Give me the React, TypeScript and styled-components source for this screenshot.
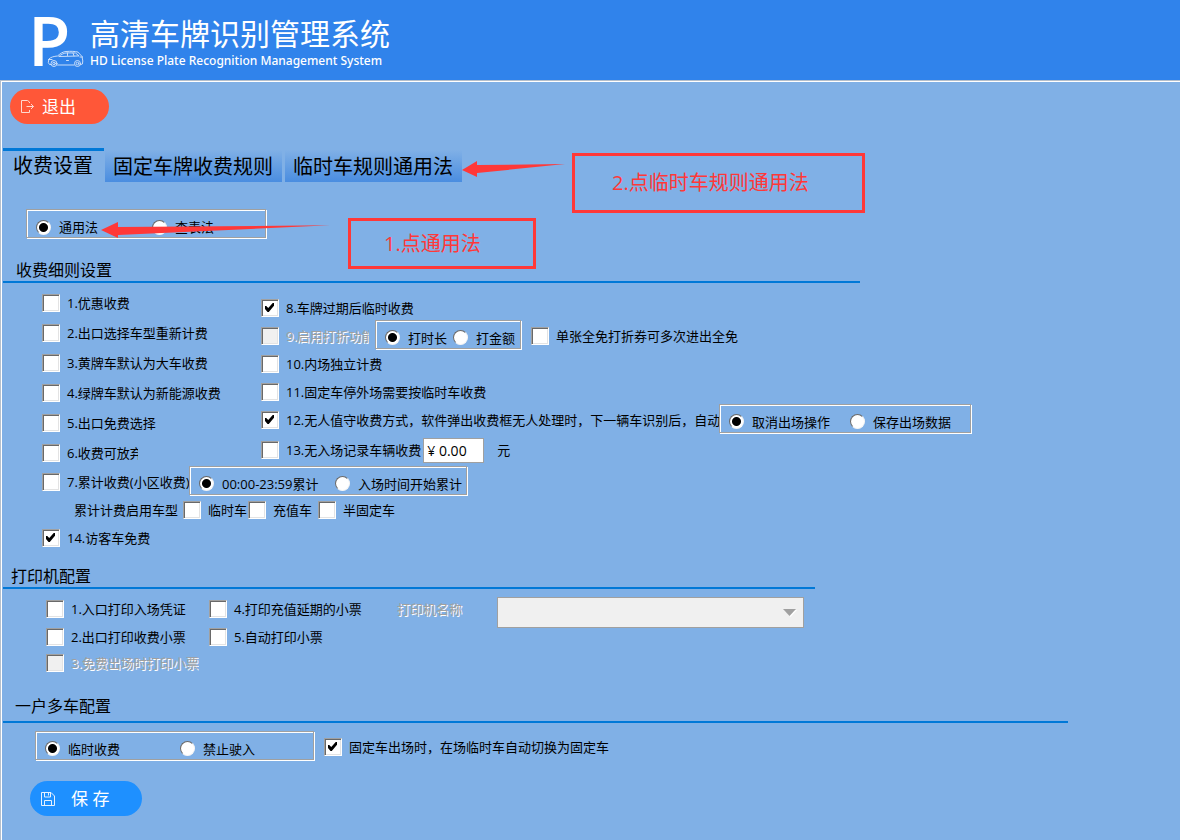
import React, { useId, useState } from "react";
import styled, { createGlobalStyle } from "styled-components";

const page = "#80b0e6";
const accent = "#0078d7";
const red = "#ff3838";

const GlobalStyle = createGlobalStyle`
  * { box-sizing: border-box; }
  body {
    margin: 0;
    background: ${page};
    color: #000;
    font: 13px/18px "Open Sans", "Noto Sans CJK SC", sans-serif;
  }
  button, input, select { font: inherit; color: inherit; margin: 0; }
`;

const Shell = styled.div`
  min-height: 100vh;
  display: flex;
  flex-direction: column;
`;

const Header = styled.header`
  height: 80px;
  display: flex;
  align-items: flex-start;
  gap: 6px;
  padding: 14px 32px 0;
  background: #3083eb;
  color: #fff;
`;

const LogoMark = styled.svg`
  flex: none;
  overflow: visible;
`;

const Titles = styled.div`
  display: flex;
  flex-direction: column;
  white-space: nowrap;
`;

const Title = styled.h1`
  margin: 0;
  font-size: 30px;
  line-height: 40px;
  font-weight: 400;
`;

const Subtitle = styled.p`
  margin: 0;
  font: 500 12px/14px "Noto Sans", sans-serif;
`;

const Main = styled.main`
  position: relative;
  flex: 1;
  padding: 8px 0 24px 2px;
  border-top: 1px solid #b4bfcc;
  border-left: 1px solid #b4bfcc;
  box-shadow: inset 1px 1px 0 #fff;
`;

const PillButton = styled.button<{ $color: string; $gap: number; $width: number; $left: number }>`
  display: flex;
  align-items: center;
  gap: ${(p) => p.$gap}px;
  width: ${(p) => p.$width}px;
  height: 35px;
  margin-left: ${(p) => p.$left}px;
  padding: 0 10px;
  border: 0;
  border-radius: 18px;
  background: ${(p) => p.$color};
  color: #fff;
  font-size: 17px;
  line-height: 24px;
  white-space: nowrap;
`;

const Tabs = styled.div`
  display: flex;
  align-items: flex-end;
  gap: 3px;
  height: 34px;
  margin-top: 24px;
`;

const Tab = styled.button<{ $active?: boolean }>`
  height: ${(p) => (p.$active ? 34 : 32)}px;
  margin-right: ${(p) => (p.$active ? -2 : 0)}px;
  padding: ${(p) => (p.$active ? "0 11px 2px 10px" : "0 9px 0 8px")};
  border: 0;
  border-top: ${(p) => (p.$active ? `3px solid ${accent}` : "0")};
  background: ${(p) => (p.$active ? page : `linear-gradient(${page}, #4a8de0)`)};
  font-size: 20px;
  line-height: 29px;
  white-space: nowrap;
`;

const GroupBox = styled.div<{ $width: number }>`
  display: flex;
  flex: none;
  align-items: center;
  width: ${(p) => p.$width}px;
  height: 29px;
  margin-bottom: 4px;
  padding: 7px 0 0 9px;
  border: 1px solid #a0a0a0;
  box-shadow: 1px 1px 0 #fff, inset 1px 1px 0 #fff;
  background: ${page};
`;

const ModeRow = styled.div`
  margin: 27px 0 0 23px;
`;

const Section = styled.section<{ $top: number; $line: number }>`
  margin-top: ${(p) => p.$top}px;
  & > h2 { max-width: ${(p) => p.$line}px; }
`;

const SectionTitle = styled.h2<{ $indent: number; $bottom?: number }>`
  margin: 0;
  padding: 0 0 ${(p) => p.$bottom ?? 0}px ${(p) => p.$indent}px;
  border-bottom: 2px solid ${accent};
  font-size: 16px;
  line-height: 22px;
  font-weight: 400;
`;

const Columns = styled.div<{ $left: number; $top: number }>`
  display: flex;
  padding: ${(p) => p.$top}px 0 0 ${(p) => p.$left}px;
`;

const Column = styled.div<{ $width?: number; $top?: number }>`
  flex: none;
  width: ${(p) => (p.$width ? `${p.$width}px` : "auto")};
  padding-top: ${(p) => p.$top ?? 0}px;
`;

const Row = styled.div<{ $height?: number; $left?: number; $top?: number }>`
  display: flex;
  align-items: center;
  height: ${(p) => p.$height ?? 28}px;
  padding-left: ${(p) => p.$left ?? 0}px;
  margin-top: ${(p) => p.$top ?? 0}px;
  white-space: nowrap;
`;

const Choice = styled.span<{ $width?: number; $gap?: number }>`
  display: flex;
  flex: none;
  align-items: center;
  gap: ${(p) => p.$gap ?? 7}px;
  width: ${(p) => (p.$width ? `${p.$width}px` : "auto")};
  overflow: hidden;
  white-space: nowrap;
`;

const ChoiceLabel = styled.label<{ $disabled?: boolean }>`
  color: ${(p) => (p.$disabled ? "#a0a0a0" : "#000")};
  text-shadow: ${(p) => (p.$disabled ? "1px 1px 0 #fff" : "none")};
`;

const Checkbox = styled.input`
  appearance: none;
  position: relative;
  flex: none;
  width: 18px;
  height: 18px;
  border: 1px solid;
  border-color: #a0a0a0 #fff #fff #a0a0a0;
  background: #fff;
  box-shadow: inset 1px 1px 0 #696969, inset -1px -1px 0 #e3e3e3;
  &:disabled { background: #f0f0f0; }
  &:checked::after {
    content: "";
    position: absolute;
    left: 3px;
    top: 3px;
    width: 9px;
    height: 9px;
    background: #000;
    clip-path: polygon(0 33%, 14% 33%, 36% 55%, 86% 0, 100% 0, 100% 30%, 42% 100%, 28% 100%, 0 68%);
  }
`;

const Radio = styled.input`
  appearance: none;
  flex: none;
  width: 15px;
  height: 15px;
  border: 1px solid;
  border-color: #696969 #f4f4f4 #f4f4f4 #696969;
  border-radius: 50%;
  background: #fff;
  &:checked { background: radial-gradient(circle, #000 4px, #fff 5px); }
`;

const Price = styled.input`
  width: 61px;
  height: 25px;
  margin: 0 13px 0 2px;
  padding: 0 3px;
  border: 1px solid #a0a0a0;
  background: #fff;
  font-size: 14px;
`;

const SelectWrap = styled.span`
  position: relative;
  display: flex;
  margin: 6px 0 0 35px;
  svg { position: absolute; right: 7px; top: 12px; }
`;

const PrinterSelect = styled.select`
  appearance: none;
  width: 307px;
  height: 31px;
  border: 1px solid #a0a0a0;
  border-radius: 0;
  background: #f0f0f0;
  opacity: 1;
`;

const Callout = styled.div<{ $x: number; $y: number; $w: number; $h: number; $pad: number }>`
  position: absolute;
  left: ${(p) => p.$x}px;
  top: ${(p) => p.$y}px;
  width: ${(p) => p.$w}px;
  height: ${(p) => p.$h}px;
  padding-left: ${(p) => p.$pad}px;
  display: flex;
  align-items: center;
  border: 3px solid ${red};
  color: ${red};
  font-size: 20px;
  line-height: 28px;
  white-space: nowrap;
`;

const Arrows = styled.svg`
  position: absolute;
  left: 99px;
  top: 79px;
  pointer-events: none;
`;

type CheckProps = { text: string; checked?: boolean; disabled?: boolean; width?: number };

function Check({ text, checked = false, disabled, width }: CheckProps) {
  const id = useId();
  return (
    <Choice $width={width}>
      <Checkbox id={id} type="checkbox" defaultChecked={checked} disabled={disabled} />
      <ChoiceLabel htmlFor={id} $disabled={disabled}>{text}</ChoiceLabel>
    </Choice>
  );
}

type RadioSetProps = { label: string; options: string[]; width: number; first: number };

function RadioSet({ label, options, width, first }: RadioSetProps) {
  const id = useId();
  const [value, setValue] = useState(0);
  return (
    <GroupBox $width={width} role="radiogroup" aria-label={label}>
      {options.map((option, i) => (
        <Choice key={option} $gap={8} $width={i === 0 ? first : undefined}>
          <Radio id={`${id}${i}`} type="radio" name={id} checked={value === i} onChange={() => setValue(i)} />
          <ChoiceLabel htmlFor={`${id}${i}`}>{option}</ChoiceLabel>
        </Choice>
      ))}
    </GroupBox>
  );
}

function Logo() {
  return (
    <LogoMark width="52" height="54" viewBox="0 0 52 54" fill="none" aria-hidden="true">
      <text x="-4" y="52" fill="#fff" fontFamily="Open Sans" fontWeight="600" fontSize="69">P</text>
      <g stroke="#c9defa" strokeWidth="1" strokeLinecap="round" strokeLinejoin="round">
        <path d="M19 50.500h-1.500l-1.200-2 .6-3.500c2-2 5-2.600 8.600-3 3-2.600 5.500-4.300 8.500-4.500 5-.4 9-.2 12 .6l4 4.400.8 4.500-.4 3-2.400.8M25.500 51H42" />
        <path d="M27 42.300c2.500-2 5-3.300 8-3.400l8.500.1 3.300 2.700z" />
        <path d="M35.500 39v2.500M41 39l1 3M34.500 46.500h2M16.500 45.500h3.500M48 43h2.500" />
        <circle cx="22" cy="49.500" r="3" />
        <circle cx="22" cy="49.500" r="1.300" />
        <circle cx="45.500" cy="49.500" r="3" />
        <circle cx="45.500" cy="49.500" r="1.300" />
      </g>
    </LogoMark>
  );
}

const leftChecks: CheckProps[] = [
  { text: "1.优惠收费" },
  { text: "2.出口选择车型重新计费" },
  { text: "3.黄牌车默认为大车收费" },
  { text: "4.绿牌车默认为新能源收费" },
  { text: "5.出口免费选择" },
  { text: "6.收费可放弃", width: 96 },
];

export default function App() {
  return (
    <Shell>
      <GlobalStyle />
      <Header>
        <Logo />
        <Titles>
          <Title>高清车牌识别管理系统</Title>
          <Subtitle>HD License Plate Recognition Management System</Subtitle>
        </Titles>
      </Header>
      <Main>
        <PillButton type="button" $color="#ff5738" $gap={7} $width={99} $left={7}>
          <svg width="15" height="15" viewBox="0 0 15 15" fill="none" stroke="#ffd9d0" aria-hidden="true">
            <path d="M9.500 4V3L7.500 1.500h-6v12h8V11M6.500 7.500h7M11 5l2.500 2.500L11 10" />
          </svg>
          退出
        </PillButton>

        <Tabs role="tablist">
          <Tab type="button" role="tab" aria-selected="true" $active>收费设置</Tab>
          <Tab type="button" role="tab" aria-selected="false">固定车牌收费规则</Tab>
          <Tab type="button" role="tab" aria-selected="false">临时车规则通用法</Tab>
        </Tabs>

        <ModeRow>
          <RadioSet label="收费方法" options={["通用法", "查表法"]} width={240} first={116} />
        </ModeRow>

        <Section $top={21} $line={857}>
          <SectionTitle $indent={13}>收费细则设置</SectionTitle>
          <Columns $left={39} $top={5}>
            <Column $width={219}>
              {leftChecks.map((item) => (
                <Row key={item.text} $height={30}><Check {...item} /></Row>
              ))}
            </Column>
            <Column $top={6}>
              <Row><Check text="8.车牌过期后临时收费" checked /></Row>
              <Row>
                <Check text="9.启用打折功能" disabled width={108} />
                <Row $left={6}>
                  <RadioSet label="打折方式" options={["打时长", "打金额"]} width={146} first={68} />
                </Row>
                <Row $left={10}><Check text="单张全免打折券可多次进出全免" /></Row>
              </Row>
              <Row><Check text="10.内场独立计费" /></Row>
              <Row><Check text="11.固定车停外场需要按临时车收费" /></Row>
              <Row>
                <Check text="12.无人值守收费方式，软件弹出收费框无人处理时，下一辆车识别后，自动" checked width={458} />
                <RadioSet label="无人处理" options={["取消出场操作", "保存出场数据"]} width={252} first={121} />
              </Row>
              <Row $height={32}>
                <Check text="13.无入场记录车辆收费" />
                <Price aria-label="无入场记录车辆收费" defaultValue="¥ 0.00" />
                <span>元</span>
              </Row>
            </Column>
          </Columns>
          <Row $left={39}>
            <Check text="7.累计收费(小区收费)" width={147} />
            <RadioSet label="累计方式" options={["00:00-23:59累计", "入场时间开始累计"]} width={278} first={136} />
          </Row>
          <Row $left={71}>
            <Choice $width={109}>累计计费启用车型</Choice>
            <Check text="临时车" width={65} />
            <Check text="充值车" width={70} />
            <Check text="半固定车" />
          </Row>
          <Row $left={39}><Check text="14.访客车免费" checked /></Row>
        </Section>

        <Section $top={13} $line={812}>
          <SectionTitle $indent={8}>打印机配置</SectionTitle>
          <Columns $left={43} $top={6}>
            <Column $width={163}>
              <Row><Check text="1.入口打印入场凭证" /></Row>
              <Row><Check text="2.出口打印收费小票" /></Row>
              <Row $height={24}><Check text="3.免费出场时打印小票" disabled /></Row>
            </Column>
            <Column $width={188}>
              <Row><Check text="4.打印充值延期的小票" /></Row>
              <Row><Check text="5.自动打印小票" /></Row>
            </Column>
            <Column>
              <Row>
                <ChoiceLabel htmlFor="printer" $disabled>打印机名称</ChoiceLabel>
                <SelectWrap>
                  <PrinterSelect id="printer" disabled />
                  <svg width="14" height="8" viewBox="0 0 14 8" aria-hidden="true">
                    <path d="M1 1h13L7.500 8z" fill="#fff" />
                    <path d="M0 0h13L6.500 7z" fill="#a0a0a0" />
                  </svg>
                </SelectWrap>
              </Row>
            </Column>
          </Columns>
        </Section>

        <Section $top={20} $line={1065}>
          <SectionTitle $indent={12} $bottom={4}>一户多车配置</SectionTitle>
          <Row $left={32} $top={10}>
            <RadioSet label="多车处理" options={["临时收费", "禁止驶入"]} width={279} first={135} />
            <Row $left={10}><Check text="固定车出场时，在场临时车自动切换为固定车" checked /></Row>
          </Row>
        </Section>

        <Row $height={35} $top={20}>
          <PillButton type="button" $color="#1e90ff" $gap={15} $width={112} $left={27}>
            <svg width="16" height="16" viewBox="0 0 16 16" fill="none" stroke="#e4f1ff" aria-hidden="true">
              <path d="M1.500 1.500h9.500l3.500 3.500v9.500h-13zM4.500 1.500v4.500h6V2M8.500 2v2.500M4.500 14.500V9.500h7v5" />
            </svg>
            保 存
          </PillButton>
        </Row>

        <Callout $x={347} $y={137} $w={188} $h={51} $pad={33}>1.点通用法</Callout>
        <Callout $x={571} $y={72} $w={293} $h={60} $pad={37}>2.点临时车规则通用法</Callout>
        <Arrows width="470" height="80" viewBox="100 160 470 80" fill={red} aria-hidden="true">
          <path d="M462 170L477 161V165L565 164L477 173V177Z" />
          <path d="M101 230L118 222V227L330 225.300L118 235V238Z" />
        </Arrows>
      </Main>
    </Shell>
  );
}
